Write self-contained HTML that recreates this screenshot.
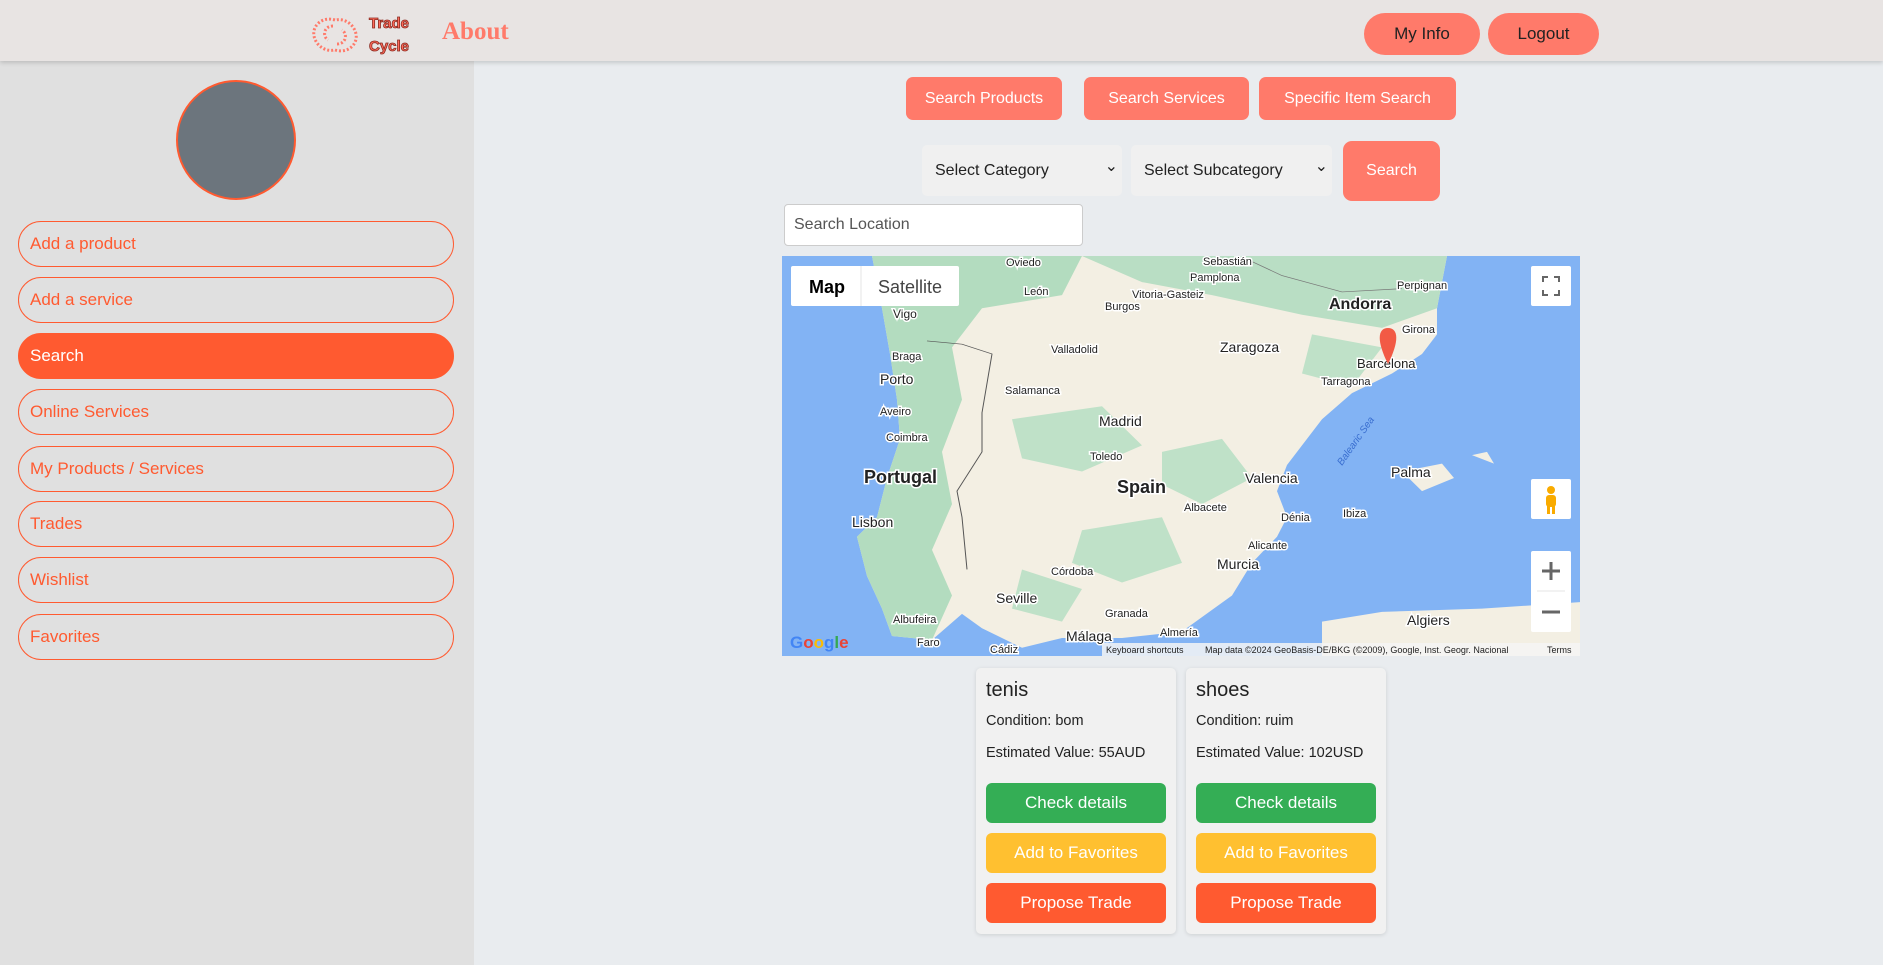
<!DOCTYPE html>
<html><head><meta charset="utf-8"><style>
*{box-sizing:border-box;margin:0;padding:0}
body{width:1883px;height:965px;overflow:hidden;font-family:"Liberation Sans",Arial,sans-serif;background:#e9ecef;position:relative}
.hdr{position:absolute;left:0;top:0;width:1883px;height:61px;background:#e8e4e3;box-shadow:0 2px 4px rgba(0,0,0,.15);z-index:2}
.about{position:absolute;left:442px;top:18px;font:bold 25px "Liberation Serif",serif;color:#ff7a6a}
.hb{position:absolute;top:13px;height:42px;background:#ff7a6a;color:#222;border-radius:21px;font-size:17px;display:flex;align-items:center;justify-content:center}
.side{position:absolute;left:0;top:61px;width:474px;height:904px;background:#e0e0e0}
.av{position:absolute;left:176px;top:19px;width:120px;height:120px;border-radius:50%;background:#6c757d;border:2px solid #ff5a30}
.nav{position:absolute;left:18px;width:436px;height:46px;border:1.5px solid #ff5a30;border-radius:23px;color:#ff5a30;font-size:17px;padding-left:11px;display:flex;align-items:center}
.nav.act{background:#ff5a30;color:#fff}
.tb{position:absolute;top:77px;height:43px;background:#ff7a6a;color:#fff;border-radius:7px;font-size:16px;display:flex;align-items:center;justify-content:center}
.sel{position:absolute;top:145px;height:51px;background:#f0f0f0;border-radius:5px;font-size:16px;color:#222;padding-left:13px;display:flex;align-items:center}
.sel:after{content:"⌄";position:absolute;right:4px;top:11px;font-size:16px}
.card{position:absolute;top:668px;width:200px;height:266px;background:#f1f1f1;border-radius:5px;box-shadow:0 1px 4px rgba(0,0,0,.12)}
.card h3{position:absolute;left:10px;top:11px;font-size:20px;font-weight:normal;color:#222}
.card p{position:absolute;left:10px;font-size:14.5px;color:#222}
.cb{position:absolute;left:10px;width:180px;height:40px;border-radius:6px;color:#fff;font-size:17px;display:flex;align-items:center;justify-content:center}
</style></head><body>
<div class="hdr">
<svg style="position:absolute;left:308px;top:14px" width="54" height="42" viewBox="0 0 54 42">
<g fill="none" stroke="#ff7a6a" stroke-width="3" stroke-dasharray="2 2">
<path d="M27 6 C14 2 4 12 6 22 C8 32 18 38 26 36"/><path d="M27 36 C40 40 50 30 48 20 C46 10 36 4 28 6"/>
<path d="M25 12 C16 12 14 22 20 26"/><path d="M29 30 C38 30 40 20 34 16"/></g></svg>
<div style="position:absolute;left:369px;top:12px;font:bold 15px 'Liberation Sans',sans-serif;color:#ff6a5a;line-height:23px;-webkit-text-stroke:0.8px #8a2a20">Trade<br>Cycle</div>
<div class="about">About</div>
<div class="hb" style="left:1364px;width:116px">My Info</div>
<div class="hb" style="left:1488px;width:111px">Logout</div>
</div>
<div class="side">
<div class="av"></div>
<div class="nav" style="top:160px">Add a product</div>
<div class="nav" style="top:216px">Add a service</div>
<div class="nav act" style="top:272px">Search</div>
<div class="nav" style="top:328px">Online Services</div>
<div class="nav" style="top:385px">My Products / Services</div>
<div class="nav" style="top:440px">Trades</div>
<div class="nav" style="top:496px">Wishlist</div>
<div class="nav" style="top:553px">Favorites</div>
</div>
<div class="tb" style="left:906px;width:156px">Search Products</div>
<div class="tb" style="left:1084px;width:165px">Search Services</div>
<div class="tb" style="left:1259px;width:197px">Specific Item Search</div>
<div class="sel" style="left:922px;width:200px">Select Category</div>
<div class="sel" style="left:1131px;width:201px">Select Subcategory</div>
<div class="tb" style="left:1343px;top:141px;width:97px;height:60px;border-radius:9px">Search</div>
<div style="position:absolute;left:784px;top:204px;width:299px;height:42px;background:#fff;border:1px solid #ccc;border-radius:4px;font-size:16px;color:#555;padding-left:9px;display:flex;align-items:center">Search Location</div>
<svg style="position:absolute;left:782px;top:256px" width="798" height="400" viewBox="0 0 798 400" font-family="Liberation Sans,sans-serif">
<rect width="798" height="400" fill="#82b3f4"/>
<g transform="scale(1,0.653)">
<path d="M90 0 L665 0 L655 80 L655 120 L640 150 L610 180 L570 210 L540 250 L505 320 L495 360 L505 400 L495 430 L470 470 L450 520 L400 575 L340 585 L280 585 L240 600 L200 570 L180 548 L150 588 L110 582 L100 540 L85 490 L75 430 L95 400 L105 340 L118 280 L115 220 L108 150 L100 80 Z" fill="#f3efe3"/>
<path d="M90 0 L300 0 L280 60 L200 80 L170 140 L180 220 L160 300 L170 380 L150 450 L170 520 L150 588 L110 582 L100 540 L85 490 L75 430 L95 400 L105 340 L118 280 L115 220 L108 150 L100 80 Z" fill="#b3dcbf"/>
<path d="M300 0 L665 0 L655 80 L600 110 L520 90 L430 60 L360 40Z" fill="#b9dec4"/>
<path d="M230 250 L320 230 L360 290 L300 330 L240 310Z M380 300 L440 280 L470 340 L420 380 L380 350Z M300 420 L380 400 L400 470 L340 500 L290 470Z M530 120 L600 140 L570 200 L520 180Z M240 480 L300 510 L280 560 L230 540Z" fill="#bfe1c8"/>
<path d="M540 560 L600 545 L700 540 L798 530 L798 620 L540 620Z" fill="#f3efe3"/>
<path d="M620 330 L660 318 L672 340 L640 360Z M690 305 L705 300 L712 318Z" fill="#f3efe3"/>
<path d="M465 5 L500 30 L560 55 L620 50" stroke="#777" fill="none"/>
<path d="M145 130 L180 135 L210 150 L200 240 L200 300 L175 360 L180 400 L185 480" stroke="#555" fill="none"/>
</g>
<g fill="#222" font-size="11" stroke="#fff" stroke-width="3" paint-order="stroke">
<text x="111" y="62" font-size="12">Vigo</text><text x="110" y="104">Braga</text><text x="98" y="128" font-size="14">Porto</text>
<text x="98" y="159">Aveiro</text><text x="104" y="185">Coimbra</text><text x="82" y="227" font-size="18" font-weight="bold">Portugal</text>
<text x="70" y="271" font-size="14">Lisbon</text><text x="111" y="367">Albufeira</text><text x="135" y="390">Faro</text>
<text x="224" y="10">Oviedo</text><text x="242" y="39">León</text><text x="323" y="54">Burgos</text><text x="350" y="42">Vitoria-Gasteiz</text>
<text x="408" y="25">Pamplona</text><text x="421" y="9">Sebastián</text><text x="269" y="97">Valladolid</text>
<text x="223" y="138">Salamanca</text><text x="317" y="170" font-size="14">Madrid</text><text x="308" y="204">Toledo</text>
<text x="335" y="237" font-size="18" font-weight="bold">Spain</text><text x="402" y="255">Albacete</text>
<text x="438" y="96" font-size="14">Zaragoza</text><text x="547" y="53" font-size="16" font-weight="bold">Andorra</text>
<text x="615" y="33">Perpignan</text><text x="620" y="77">Girona</text><text x="575" y="112" font-size="13">Barcelona</text>
<text x="539" y="129">Tarragona</text><text x="463" y="227" font-size="14">Valencia</text><text x="499" y="265">Dénia</text>
<text x="466" y="293">Alicante</text><text x="435" y="313" font-size="14">Murcia</text><text x="561" y="261">Ibiza</text>
<text x="609" y="221" font-size="14">Palma</text><text x="269" y="319">Córdoba</text><text x="214" y="347" font-size="14">Seville</text>
<text x="323" y="361">Granada</text><text x="378" y="380">Almería</text><text x="284" y="385" font-size="14">Málaga</text>
<text x="208" y="397">Cádiz</text><text x="625" y="369" font-size="14">Algiers</text></g>
<text x="560" y="210" font-size="10" fill="#3a6fd0" font-style="italic" transform="rotate(-55 560 210)">Balearic Sea</text>
<path d="M606 72 C616 72 618 84 606 108 C594 84 596 72 606 72Z" fill="#f25a45"/>
<rect x="9" y="10" width="168" height="40" fill="#fff" rx="2"/><line x1="79" y1="10" x2="79" y2="50" stroke="#e6e6e6"/>
<text x="27" y="37" font-size="18" font-weight="bold" fill="#000">Map</text><text x="96" y="37" font-size="18" fill="#444">Satellite</text>
<rect x="749" y="10" width="40" height="40" fill="#fff" rx="2"/><path d="M761 26v-5h5M777 26v-5h-5M761 34v5h5M777 34v5h-5" stroke="#666" stroke-width="2" fill="none"/>
<rect x="749" y="223" width="40" height="40" fill="#fff" rx="2"/><circle cx="769" cy="234" r="4" fill="#f9ab00"/><rect x="764" y="239" width="10" height="12" rx="3" fill="#f9ab00"/><rect x="765" y="249" width="3" height="9" fill="#f9ab00"/><rect x="770" y="249" width="3" height="9" fill="#f9ab00"/>
<rect x="749" y="295" width="40" height="81" fill="#fff" rx="2"/><line x1="755" y1="335" x2="783" y2="335" stroke="#e6e6e6"/>
<path d="M760 315h18M769 306v18M760 356h18" stroke="#666" stroke-width="3"/>
<text x="8" y="392" font-size="17" font-weight="bold" fill="#4285f4">G<tspan fill="#ea4335">o</tspan><tspan fill="#fbbc05">o</tspan><tspan fill="#4285f4">g</tspan><tspan fill="#34a853">l</tspan><tspan fill="#ea4335">e</tspan></text>
<rect x="320" y="387" width="478" height="13" fill="#f5f5f5" opacity=".85"/>
<text x="324" y="397" font-size="9" fill="#222">Keyboard shortcuts</text><text x="423" y="397" font-size="9" fill="#222">Map data ©2024 GeoBasis-DE/BKG (©2009), Google, Inst. Geogr. Nacional</text><text x="765" y="397" font-size="9" fill="#222">Terms</text>
</svg>
<div class="card" style="left:976px"><h3>tenis</h3><p style="top:45px">Condition: bom</p><p style="top:77px">Estimated Value: 55AUD</p>
<div class="cb" style="top:115px;background:#34ae55">Check details</div><div class="cb" style="top:165px;background:#ffc030">Add to Favorites</div><div class="cb" style="top:215px;background:#ff5a30">Propose Trade</div></div>
<div class="card" style="left:1186px"><h3>shoes</h3><p style="top:45px">Condition: ruim</p><p style="top:77px">Estimated Value: 102USD</p>
<div class="cb" style="top:115px;background:#34ae55">Check details</div><div class="cb" style="top:165px;background:#ffc030">Add to Favorites</div><div class="cb" style="top:215px;background:#ff5a30">Propose Trade</div></div>
</body></html>
